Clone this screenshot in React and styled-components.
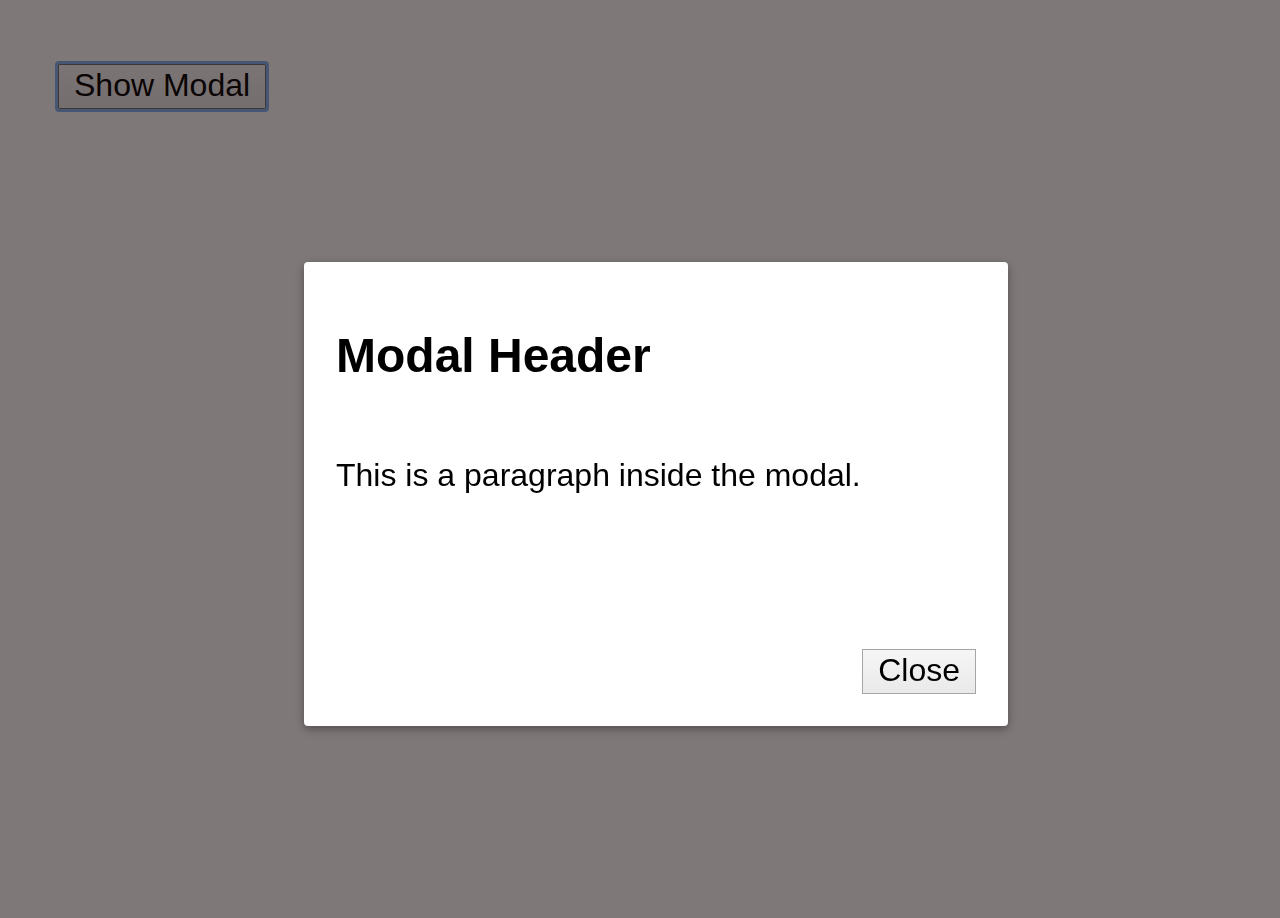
import React from 'react'
import styled, { createGlobalStyle } from 'styled-components'

const GlobalStyle = createGlobalStyle`
  html, body {
    margin: 0;
    padding: 0;
    background: #ffffff;
    font-family: 'Liberation Sans', Arial, Helvetica, sans-serif;
    color: #000;
  }
`

const Page = styled.main`
  min-height: 918px;
  box-sizing: border-box;
  padding: 64px 0 0 58px;
`

const Button = styled.button`
  font-family: 'Liberation Sans', Arial, Helvetica, sans-serif;
  font-size: 32px;
  line-height: 37px;
  color: #000;
  padding: 2px 15px 4px;
  border: 1px solid #a6a6a6;
  border-radius: 0;
  background: linear-gradient(#f6f6f6, #e9e9e9);
  cursor: pointer;
  ${(p) =>
    p.$focused &&
    `
    outline: 3px solid #86b4f2;
    outline-offset: 0;
    border-color: #6f6f6f;
    border-radius: 1px;
  `}
`

const Overlay = styled.div`
  position: fixed;
  inset: 0;
  background: rgba(20, 10, 10, 0.55);
  padding: 262px 0 0 304px;
  box-sizing: border-box;
`

const Modal = styled.section`
  width: 704px;
  height: 464px;
  box-sizing: border-box;
  background: #fff;
  border-radius: 4px;
  box-shadow: 0 3px 8px rgba(0, 0, 0, 0.35);
  padding: 32px;
  display: flex;
  flex-direction: column;
`

const Header = styled.h2`
  margin: 35px 0 0;
  font-size: 48px;
  font-weight: 700;
  line-height: 54px;
`

const Body = styled.p`
  margin: 74px 0 0;
  font-size: 32px;
  line-height: 37px;
`

const Footer = styled.footer`
  margin-top: auto;
  display: flex;
  justify-content: flex-end;
`

export default function App() {
  const [open, setOpen] = React.useState(true)
  return (
    <>
      <GlobalStyle />
      <Page>
        <Button $focused onClick={() => setOpen(true)}>
          Show Modal
        </Button>
      </Page>
      {open && (
        <Overlay>
          <Modal role='dialog'>
            <Header>Modal Header</Header>
            <Body>This is a paragraph inside the modal.</Body>
            <Footer>
              <Button onClick={() => setOpen(false)}>Close</Button>
            </Footer>
          </Modal>
        </Overlay>
      )}
    </>
  )
}
